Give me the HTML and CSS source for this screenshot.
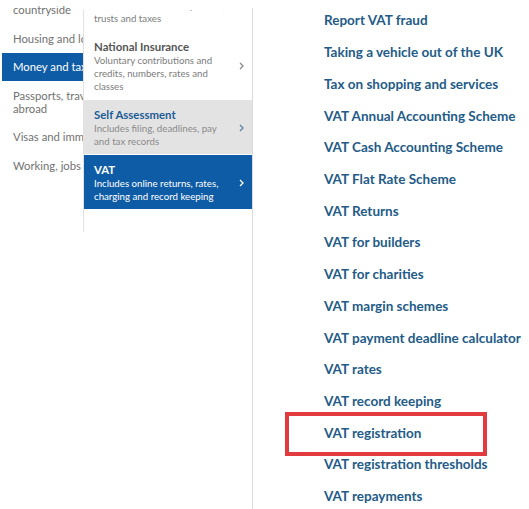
FILE: index.html
```html
<!DOCTYPE html>
<html lang="en">
<head>
<meta charset="utf-8">
<title>Money and tax – VAT</title>
<link rel="stylesheet" href="styles.css">
</head>
<body>
<div class="browse">
  <div class="topics-wrap">
    <ul class="topics">
      <li class="topic">Environment and<br>countryside</li>
      <li class="topic">Housing and local services</li>
      <li class="topic topic-active">Money and tax</li>
      <li class="topic">Passports, travel and living<br>abroad</li>
      <li class="topic">Visas and immigration</li>
      <li class="topic">Working, jobs and pensions</li>
    </ul>
  </div>

  <div class="panel">
    <ul class="subtopics">
      <li class="sub">
        <div class="sub-text">
          <div class="sub-title">Inheritance Tax</div>
          <div class="sub-desc">Includes estates, wills, probate,<br>trusts and taxes</div>
        </div>
      </li>
      <li class="sub">
        <div class="sub-text">
          <div class="sub-title">National Insurance</div>
          <div class="sub-desc">Voluntary contributions and<br>credits, numbers, rates and<br>classes</div>
        </div>
        <svg class="chev" viewBox="0 0 5 8" width="5" height="8"><polyline points="1,1 4,4 1,7"/></svg>
      </li>
      <li class="sub sub-visited">
        <div class="sub-text">
          <div class="sub-title">Self Assessment</div>
          <div class="sub-desc">Includes filing, deadlines, pay<br>and tax records</div>
        </div>
        <svg class="chev" viewBox="0 0 5 8" width="5" height="8"><polyline points="1,1 4,4 1,7"/></svg>
      </li>
      <li class="sub sub-active">
        <div class="sub-text">
          <div class="sub-title">VAT</div>
          <div class="sub-desc">Includes online returns, rates,<br>charging and record keeping</div>
        </div>
        <svg class="chev" viewBox="0 0 5 8" width="5" height="8"><polyline points="1,1 4,4 1,7"/></svg>
      </li>
    </ul>
  </div>

  <div class="links-col">
    <ul class="links">
      <li><a href="#">Report VAT fraud</a></li>
      <li><a href="#">Taking a vehicle out of the UK</a></li>
      <li><a href="#">Tax on shopping and services</a></li>
      <li><a href="#">VAT Annual Accounting Scheme</a></li>
      <li><a href="#">VAT Cash Accounting Scheme</a></li>
      <li><a href="#">VAT Flat Rate Scheme</a></li>
      <li><a href="#">VAT Returns</a></li>
      <li><a href="#">VAT for builders</a></li>
      <li><a href="#">VAT for charities</a></li>
      <li><a href="#">VAT margin schemes</a></li>
      <li><a href="#">VAT payment deadline calculator</a></li>
      <li><a href="#">VAT rates</a></li>
      <li><a href="#">VAT record keeping</a></li>
      <li class="highlighted"><a href="#">VAT registration</a><span class="mark"></span></li>
      <li><a href="#">VAT registration thresholds</a></li>
      <li><a href="#">VAT repayments</a></li>
    </ul>
  </div>
</div>
</body>
</html>
```
FILE: styles.css
```css
html, body {
  margin: 0;
  padding: 0;
  background: #ffffff;
  overflow: hidden;
}

body {
  font-family: "Lato", "Liberation Sans", sans-serif;
  width: 529px;
  height: 509px;
}

ul {
  list-style: none;
  margin: 0;
  padding: 0;
}

.browse {
  display: flex;
  align-items: flex-start;
  height: 509px;
}

/* left column of topics */
.topics-wrap {
  flex: 0 0 81px;
  width: 81px;
  margin-left: 2px;
  margin-top: 6px;
  overflow: hidden;
}

.topics {
  margin-top: -23.5px;
}

.topic {
  padding: 7.75px 0 7.75px 11px;
  font-size: 11.3px;
  line-height: 13px;
  color: #727272;
  white-space: nowrap;
}

.topic-active {
  background: #0f5ca6;
  color: #ffffff;
}

/* middle panel of sub-topics */
.panel {
  flex: 0 0 168px;
  width: 168px;
  height: 222px;
  margin-top: 10px;
  border-left: 1px solid #e2e2e2;
  background: #ffffff;
  overflow: hidden;
}

.subtopics {
  margin-top: -33px;
}

.sub {
  display: flex;
  align-items: center;
  padding: 7px 8px 6px 10px;
  margin-bottom: 1px;
}

.sub-text {
  flex: 1;
}

.sub-title {
  font-weight: 700;
  font-size: 11.4px;
  line-height: 15px;
  color: #555555;
}

.sub-desc {
  font-size: 9.7px;
  line-height: 13px;
  color: #7c7c7c;
  white-space: nowrap;
}

.chev {
  flex: 0 0 auto;
  display: block;
  fill: none;
  stroke: #8a8a8a;
  stroke-width: 1.3;
}

.sub-visited {
  background: #e3e3e3;
}

.sub-visited .sub-title {
  color: #1d5c96;
}

.sub-visited .sub-desc {
  color: #8a8a8a;
}

.sub-visited .chev {
  stroke: #5d7fa3;
}

.sub-active {
  background: #0f5ca6;
}

.sub-active .sub-title,
.sub-active .sub-desc {
  color: #ffffff;
}

.sub-active .chev {
  stroke: #ffffff;
}

/* right column of links */
.links-col {
  flex: 1;
  align-self: stretch;
  margin-top: 8px;
  border-left: 1px solid #dadada;
  padding-left: 71px;
}

.links {
  margin-top: -4.6px;
}

.links li {
  line-height: 31.73px;
  height: 31.73px;
  white-space: nowrap;
}

.links a {
  font-weight: 700;
  font-size: 13.5px;
  color: #235b88;
  text-decoration: none;
}

.highlighted {
  position: relative;
}

.mark {
  position: absolute;
  left: -39px;
  top: -3.5px;
  width: 194px;
  height: 36px;
  border: 4px solid #e23b3f;
  pointer-events: none;
}
```
